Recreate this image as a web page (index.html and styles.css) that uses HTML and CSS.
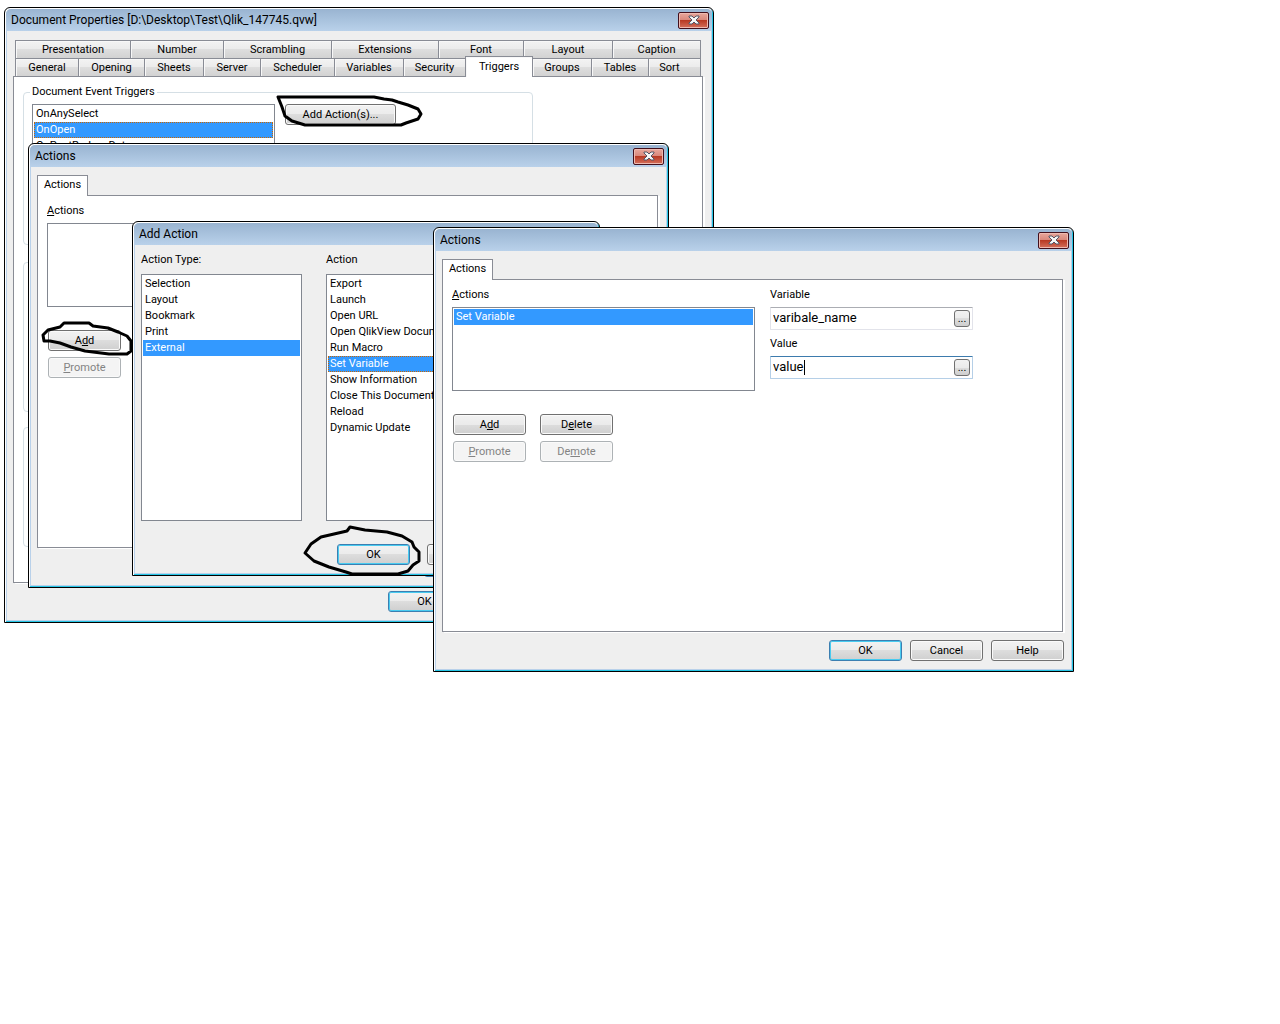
FILE: index.html
```html
<!DOCTYPE html>
<html lang="en">
<head>
<meta charset="utf-8">
<title>Document Properties</title>
<link rel="stylesheet" href="styles.css">
</head>
<body>
<main class="desktop">

<section class="window win-document" aria-label="Document Properties">
  <header class="titlebar">
    <h1 class="title">Document Properties [D:\Desktop\Test\Qlik_147745.qvw]</h1>
    <button class="close" type="button" aria-label="Close"><svg viewBox="0 0 12 10"><path d="M1 1h3l2 2 2-2h3v1L8 5l3 3v1H8L6 7 4 9H1V8l3-3-3-3z"/></svg></button>
  </header>
  <div class="body body-document">
    <div class="tabs tabs-upper">
      <button class="tab" type="button">Presentation</button>
      <button class="tab" type="button">Number</button>
      <button class="tab" type="button">Scrambling</button>
      <button class="tab" type="button">Extensions</button>
      <button class="tab" type="button">Font</button>
      <button class="tab" type="button">Layout</button>
      <button class="tab" type="button">Caption</button>
    </div>
    <div class="tabs tabs-lower">
      <button class="tab" type="button">General</button>
      <button class="tab" type="button">Opening</button>
      <button class="tab" type="button">Sheets</button>
      <button class="tab" type="button">Server</button>
      <button class="tab" type="button">Scheduler</button>
      <button class="tab" type="button">Variables</button>
      <button class="tab" type="button">Security</button>
      <button class="tab tab-active" type="button">Triggers</button>
      <button class="tab" type="button">Groups</button>
      <button class="tab" type="button">Tables</button>
      <button class="tab" type="button">Sort</button>
    </div>
    <div class="panel panel-document">
      <fieldset class="group group-events">
        <legend>Document Event Triggers</legend>
        <ul class="list list-events">
          <li>OnAnySelect</li>
          <li class="selected focused">OnOpen</li>
          <li>OnPostReduceData</li>
        </ul>
        <button class="btn btn-wide" type="button">Add Action(s)...</button>
      </fieldset>
      <fieldset class="group group-fields"></fieldset>
      <fieldset class="group group-variables"></fieldset>
    </div>
    <footer class="footer">
      <button class="btn btn-default" type="button">OK</button>
      <button class="btn" type="button">Cancel</button>
      <button class="btn" type="button">Apply</button>
      <button class="btn" type="button">Help</button>
    </footer>
  </div>
</section>

<section class="window win-actions" aria-label="Actions">
  <header class="titlebar">
    <h2 class="title">Actions</h2>
    <button class="close" type="button" aria-label="Close"><svg viewBox="0 0 12 10"><path d="M1 1h3l2 2 2-2h3v1L8 5l3 3v1H8L6 7 4 9H1V8l3-3-3-3z"/></svg></button>
  </header>
  <div class="body">
    <button class="page-tab" type="button">Actions</button>
    <div class="panel panel-actions">
      <div class="column">
        <p class="caption"><u>A</u>ctions</p>
        <ul class="list list-actions"></ul>
        <div class="commands commands-single">
          <button class="btn" type="button">A<u>d</u>d</button>
          <button class="btn" type="button" disabled><u>P</u>romote</button>
        </div>
      </div>
    </div>
    <footer class="footer">
      <button class="btn btn-default" type="button">OK</button>
      <button class="btn" type="button">Cancel</button>
      <button class="btn" type="button">Help</button>
    </footer>
  </div>
</section>

<section class="window win-add" aria-label="Add Action">
  <header class="titlebar">
    <h2 class="title">Add Action</h2>
  </header>
  <div class="body body-add">
    <div class="choices">
      <div class="choice choice-type">
        <p class="caption">Action Type:</p>
        <ul class="list list-choice">
          <li>Selection</li>
          <li>Layout</li>
          <li>Bookmark</li>
          <li>Print</li>
          <li class="selected">External</li>
        </ul>
      </div>
      <div class="choice choice-action">
        <p class="caption">Action</p>
        <ul class="list list-choice">
          <li>Export</li>
          <li>Launch</li>
          <li>Open URL</li>
          <li>Open QlikView Document</li>
          <li>Run Macro</li>
          <li class="selected focused">Set Variable</li>
          <li>Show Information</li>
          <li>Close This Document</li>
          <li>Reload</li>
          <li>Dynamic Update</li>
        </ul>
      </div>
    </div>
    <footer class="footer">
      <button class="btn btn-default" type="button">OK</button>
      <button class="btn" type="button">Cancel</button>
      <button class="btn" type="button">Help</button>
    </footer>
  </div>
</section>

<section class="window win-variable" aria-label="Actions: Set Variable">
  <header class="titlebar">
    <h2 class="title">Actions</h2>
    <button class="close" type="button" aria-label="Close"><svg viewBox="0 0 12 10"><path d="M1 1h3l2 2 2-2h3v1L8 5l3 3v1H8L6 7 4 9H1V8l3-3-3-3z"/></svg></button>
  </header>
  <div class="body">
    <button class="page-tab" type="button">Actions</button>
    <div class="panel panel-actions">
      <div class="column">
        <p class="caption"><u>A</u>ctions</p>
        <ul class="list list-actions"><li class="selected">Set Variable</li></ul>
        <div class="commands">
          <button class="btn" type="button">A<u>d</u>d</button>
          <button class="btn" type="button">D<u>e</u>lete</button>
          <button class="btn" type="button" disabled><u>P</u>romote</button>
          <button class="btn" type="button" disabled>De<u>m</u>ote</button>
        </div>
      </div>
      <div class="column column-fields">
        <label class="caption" for="variable">Variable</label>
        <div class="field">
          <input id="variable" type="text" value="varibale_name">
          <button class="browse" type="button" aria-label="Edit variable">...</button>
        </div>
        <label class="caption" for="value">Value</label>
        <div class="field field-active">
          <input id="value" type="text" value="value">
          <span class="caret"></span>
          <button class="browse" type="button" aria-label="Edit value">...</button>
        </div>
      </div>
    </div>
    <footer class="footer">
      <button class="btn btn-default" type="button">OK</button>
      <button class="btn" type="button">Cancel</button>
      <button class="btn" type="button">Help</button>
    </footer>
  </div>
</section>

<svg class="marks" viewBox="0 0 440 600" width="440" height="600" aria-hidden="true">
  <path d="M278 97h96l10 2 8 1 6 2 10 3 10 4 3 5-3 5-12 4-5 2H305l-13-4-7-5-3-9z"/>
  <path d="M50 341h-6l-1-6 5-5 12-3 4-4h25l4 3 15 2 10 4 9 4 4 5v10l-4 3h-18l-24-3-14-4-11-4z"/>
  <path d="M350 527l-3 4-26 6-10 7-6 9 9 8 15 6 17 5 6 2h46l10-3 5-6 6-4v-9l-5-5-2-5-10-6-15-4-22-2z"/>
</svg>

</main>
</body>
</html>
```
FILE: styles.css
```css
* { box-sizing: border-box; }

body {
  margin: 0;
  background: #fff;
  color: #000;
  font: 11px/16px Roboto, "Liberation Sans", Arial, sans-serif;
}

button, input { font: inherit; color: inherit; }
p, ul, h1, h2 { margin: 0; padding: 0; }

.desktop { position: relative; min-height: 100vh; overflow: hidden; }

/* Windows */
.window {
  position: absolute;
  display: flex;
  flex-direction: column;
  border: 1px solid #000;
  border-radius: 6px 6px 0 0;
  background: #efefef;
  box-shadow:
    inset 1px 1px 0 #fff,
    inset -1px -1px 0 #25c5e5,
    inset 2px 0 0 #b9d1ea,
    inset -2px -2px 0 #b9d1ea;
}
.win-document { left: 4px; top: 7px; width: 710px; }
.win-actions { left: 28px; top: 143px; width: 641px; }
.win-add { left: 132px; top: 221px; width: 468px; }
.win-variable { left: 433px; top: 227px; width: 641px; }

.titlebar {
  display: flex;
  align-items: center;
  justify-content: space-between;
  height: 22px;
  margin: 1px 1px 0;
  padding: 0 3px 0 5px;
  border-radius: 5px 5px 0 0;
  background: linear-gradient(#99b4d1, #b9d1ea);
}
.title { font: 12px/16px Roboto, sans-serif; }

.close {
  display: grid;
  place-items: center;
  width: 31px;
  height: 17px;
  padding: 0;
  border: 1px solid #43101c;
  border-radius: 2px;
  background: linear-gradient(#e8a79c, #d9877a 48%, #b83a24 50%, #d5705c);
  box-shadow: inset 0 0 0 1px #eeb9b0;
}
.close svg { width: 12px; height: 10px; fill: #f6f6f6; stroke: #535666; stroke-width: 1; }

.body { display: flex; flex-direction: column; padding: 8px 10px 10px 8px; }
.body-document { padding-top: 9px; }

/* Tabs */
.tabs { display: grid; padding: 0 2px; }
.tabs-upper { grid-template-columns: 115fr 93fr 108fr 107fr 85fr 89fr 89fr; }
.tabs-lower { grid-template-columns: 63fr 66fr 59fr 57fr 74fr 69fr 62fr 67fr 59fr 57fr 53fr; }
.tab {
  height: 18px;
  padding: 0;
  border: solid #898c95;
  border-width: 1px 1px 0;
  margin-right: -1px;
  background: linear-gradient(#f3f3f3, #ebebeb 50%, #dedede 50%, #d2d2d2);
  box-shadow: inset 1px 1px 0 #f8f8f8;
}
.tab:last-child { margin-right: 0; }
.tabs-lower .tab:last-child { padding-right: 10px; }
.tab-active {
  position: relative;
  height: 21px;
  margin-top: -2px;
  margin-bottom: -1px;
  background: #fff;
}
.page-tab {
  position: relative;
  align-self: flex-start;
  width: 51px;
  height: 21px;
  margin-bottom: -1px;
  padding: 0 0 2px;
  border: solid #898c95;
  border-width: 1px 1px 0;
  background: #fff;
}

.panel { border: 1px solid #898c95; background: #fff; box-shadow: 2px 1px 0 #fff; }
.panel-document { min-height: 507px; padding: 7px 9px; }
.panel-actions { display: flex; gap: 15px; min-height: 353px; padding: 7px 9px; }

/* Group boxes */
.group {
  display: flex;
  align-items: flex-start;
  gap: 10px;
  width: 510px;
  min-width: 0;
  margin: 0 0 17px;
  padding: 4px 8px;
  border: 1px solid #d5dfe5;
  border-radius: 4px;
}
.group legend { margin-left: -2px; padding: 0 2px; }
.group-events { min-height: 161px; }
.group-fields { min-height: 150px; margin-bottom: 15px; }
.group-variables { min-height: 120px; }

/* Lists */
.list {
  padding: 1px;
  border: 1px solid #828790;
  background: #fff;
  list-style: none;
  overflow: hidden;
}
.list li { height: 16px; padding: 0 2px; white-space: nowrap; }
.list .selected { background: #3399ff; color: #fff; }
.list .focused { outline: 1px dotted #cc6600; outline-offset: -1px; }
.list-events { width: 243px; min-height: 100px; }
.list-actions { width: 303px; min-height: 84px; }
.list-choice { min-height: 247px; }

/* Buttons */
.btn {
  width: 73px;
  height: 21px;
  padding: 0;
  border: 1px solid #707070;
  border-radius: 3px;
  background: linear-gradient(#f2f2f2, #ebebeb 50%, #dddddd 50%, #cfcfcf);
  box-shadow: inset 0 0 0 1px #fafafa;
}
.btn-wide { width: 111px; }
.btn-default { border-color: #3c7fb1; box-shadow: inset 0 0 0 1px #48cbf0; }
.btn:disabled { border-color: #adb2b5; background: #f4f4f4; color: #838383; }

.column { display: flex; flex-direction: column; gap: 4px; }
.column-fields { width: 203px; }
.commands {
  display: grid;
  grid-template-columns: 73px 73px;
  gap: 6px 14px;
  padding: 19px 1px 0;
}
.commands-single { grid-template-columns: 73px; }

/* Text fields */
.field {
  display: flex;
  align-items: center;
  height: 23px;
  margin-bottom: 2px;
  padding: 0 2px;
  border: 1px solid #e2e3ea;
  border-top-color: #abadb3;
  border-radius: 1px;
}
.field-active { border-color: #b5cfe7; border-top-color: #3d7bad; }
.field input {
  flex: 1;
  min-width: 0;
  height: 19px;
  padding: 0 0 2px;
  border: 0;
  outline: 0;
  background: none;
  font: 13px/16px Roboto, sans-serif;
}
.field-active input { flex: none; width: 31px; }
.caret { width: 1px; height: 15px; margin-right: auto; background: #000; }
.browse {
  width: 16px;
  height: 17px;
  padding: 0;
  border: 1px solid #707070;
  border-radius: 3px;
  background: linear-gradient(#f2f2f2, #ebebeb 50%, #dddddd 50%, #cfcfcf);
  line-height: 14px;
}

.footer { display: flex; justify-content: flex-end; gap: 8px; margin-right: -1px; padding-top: 8px; }

/* Add Action dialog */
.body-add { padding: 7px 10px 10px 8px; }
.choices { display: grid; grid-template-columns: 161px 1fr; gap: 24px; }
.choice { display: flex; flex-direction: column; gap: 6px; }
.body-add .footer { gap: 17px; padding-top: 23px; }

/* Pen marks */
.marks {
  position: absolute;
  left: 0;
  top: 0;
  fill: none;
  stroke: #000;
  stroke-width: 3;
  stroke-linejoin: round;
  pointer-events: none;
}
```
